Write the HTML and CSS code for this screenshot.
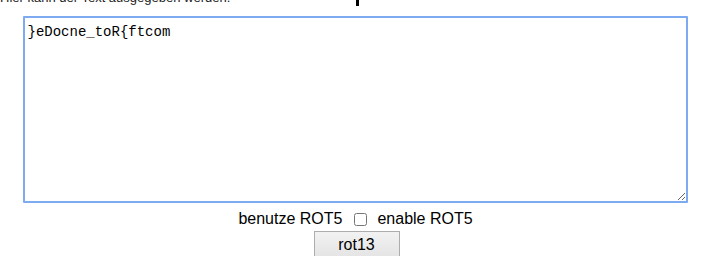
FILE: index.html
```html
<!DOCTYPE html>
<html>
<head>
<meta charset="utf-8">
<link rel="stylesheet" href="styles.css">
</head>
<body>
<div class="top">
  <p class="intro">Hier kann der Text ausgegeben werden.</p>
  <span class="caret"></span>
</div>
<div class="main">
  <textarea class="box">}eDocne_toR{ftcom</textarea>
  <div class="opts">
    <span>benutze ROT5</span>
    <input type="checkbox" class="chk">
    <span>enable ROT5</span>
  </div>
  <button class="btn">rot13</button>
</div>
</body>
</html>
```
FILE: styles.css
```css
html, body {
  margin: 0;
  padding: 0;
  background: #fff;
  overflow: hidden;
}
body {
  font-family: "Liberation Sans", Arial, sans-serif;
  font-size: 16px;
  color: #000;
}
.top {
  display: flow-root;
  height: 16px;
  position: relative;
  overflow: hidden;
}
.intro {
  margin: 0;
  margin-top: -10px;
  font-size: 13px;
  line-height: 15px;
  color: #222;
}
.caret {
  position: absolute;
  left: 356px;
  top: 0;
  width: 3px;
  height: 6px;
  background: #000;
}
.main {
  display: flex;
  flex-direction: column;
  align-items: center;
}
.box {
  display: block;
  box-sizing: border-box;
  width: 665px;
  height: 187px;
  margin: 0 0 0 -1px;
  border: 2px solid #7eaaf2;
  border-radius: 1px;
  outline: none;
  padding: 6px 3px;
  font-family: "Liberation Mono", "Courier New", monospace;
  font-size: 14px;
  line-height: 17px;
  color: #000;
  resize: both;
}
.opts {
  display: flex;
  align-items: center;
  gap: 6px;
  height: 24px;
  margin-top: 4px;
}
.chk {
  margin: 0 4px 0 6px;
  width: 13px;
  height: 13px;
}
.btn {
  width: 86px;
  height: 27px;
  margin-left: 2px;
  font-family: "Liberation Sans", Arial, sans-serif;
  font-size: 16px;
  color: #000;
  border: 1px solid #adadad;
  border-radius: 0;
  background: linear-gradient(#f2f2f2, #e4e4e4);
  padding: 0;
}
```
